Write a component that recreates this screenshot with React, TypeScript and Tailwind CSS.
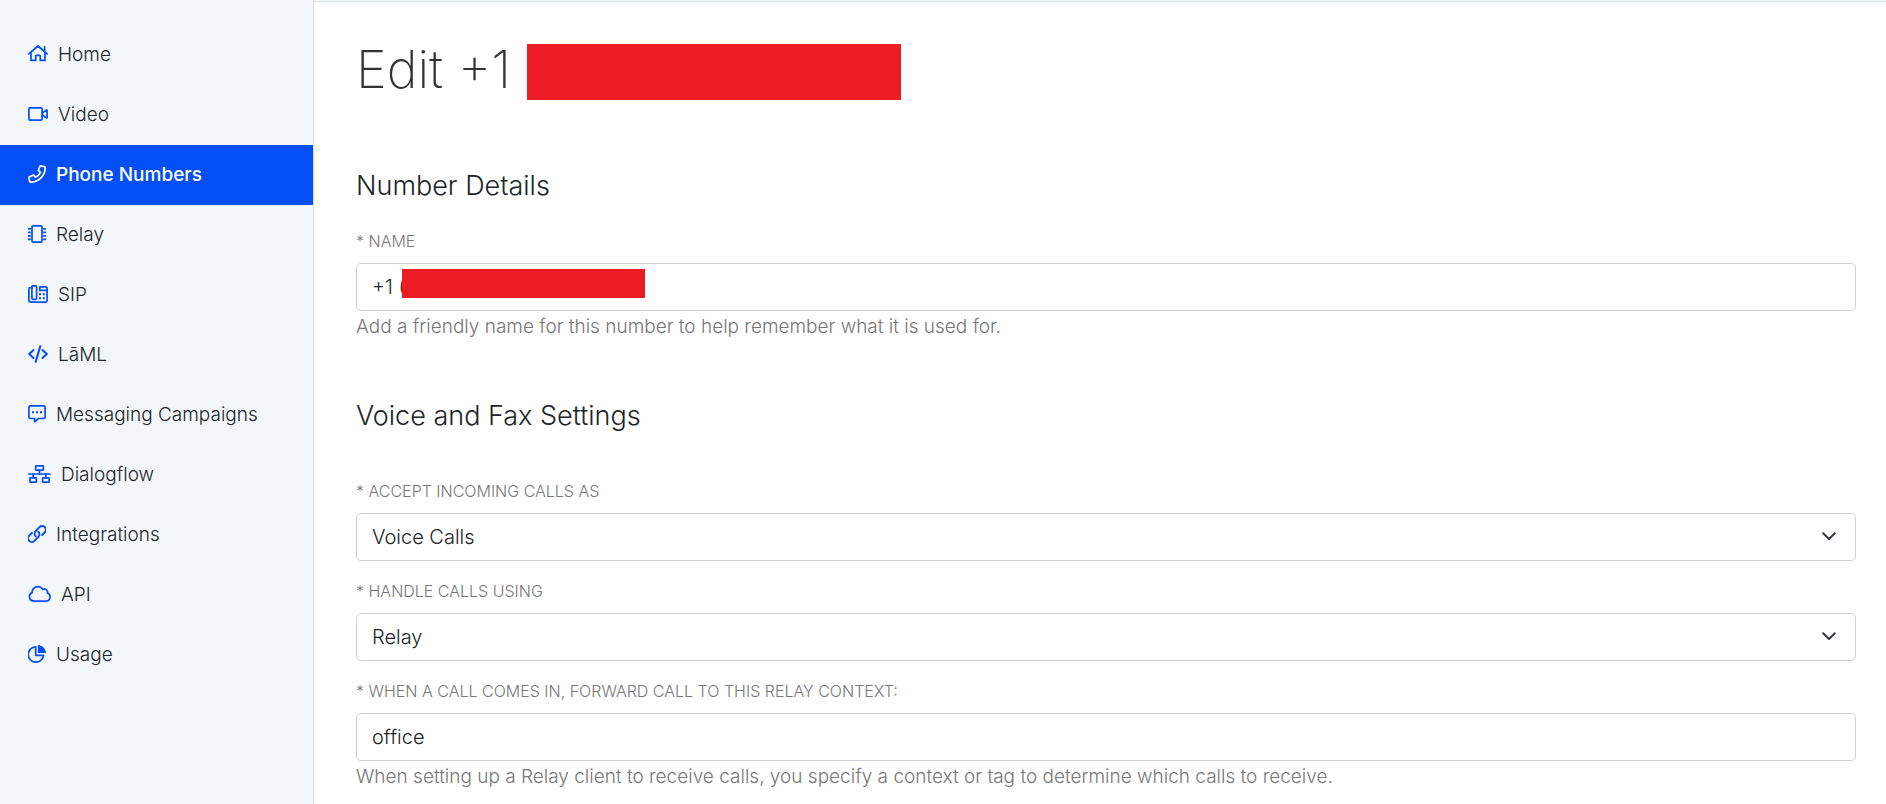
import React from 'react';

type IconProps = { width: number; children: React.ReactNode };

const Icon = ({ width, children }: IconProps) => (
  <svg
    width={width}
    height="18"
    viewBox={`0 0 ${width} 18`}
    fill="none"
    stroke="currentColor"
    strokeWidth="1.7"
    strokeLinecap="round"
    strokeLinejoin="round"
    className="flex-shrink-0"
    aria-hidden="true"
  >
    {children}
  </svg>
);

const HomeIcon = () => (
  <Icon width={20}>
    <path d="M.9 8.9 10 1l9.1 7.9M16.6 1.900v4.800" />
    <path d="M3 7.600v7.800h4.700v-4.200c0-.6.3-.9.9-.9h2.800c.6 0 .9.3.9.9v4.200H17V7.600" />
  </Icon>
);

const VideoIcon = () => (
  <Icon width={20}>
    <rect x=".9" y="2.9" width="13.2" height="12.2" rx="1.2" />
    <path d="m14.4 8 3.9-2.900c.4-.3.8-.1.8.4v7c0 .5-.4.7-.8.4L14.400 10" />
  </Icon>
);

const PhoneIcon = () => (
  <Icon width={18}>
    <path d="m12.800.9 3.600.8c.5.1.8.5.8 1C17.200 10.700 10.700 17.200 2.700 17.200c-.5 0-.9-.3-1-.8l-.8-3.500c-.1-.5.1-.9.6-1.100L5 10.300c.4-.2.8-.1 1.100.3l1.400 1.700a12 12 0 0 0 5-5l-1.700-1.400c-.4-.3-.5-.7-.3-1.100l1.400-3.300c.2-.4.5-.7.9-.6Z" />
  </Icon>
);

const ChipIcon = () => (
  <Icon width={18}>
    <rect x="4" y=".9" width="10" height="16.2" rx="1" />
    <path
      strokeLinecap="butt"
      d="M0 3.800h2.800M0 7.300h2.800M0 10.800h2.800M0 14.300h2.800M15.200 3.800H18M15.200 7.300H18M15.200 10.800H18M15.200 14.300H18"
    />
  </Icon>
);

const FaxIcon = () => (
  <Icon width={20}>
    <rect x="3.9" y=".9" width="4.7" height="13.4" rx="1.2" />
    <path d="M3.900 2.500H2.400c-.9 0-1.500.6-1.500 1.500v11.600c0 .9.6 1.500 1.500 1.500h15.200c.9 0 1.500-.6 1.500-1.500V3.800c0-1.100-.6-1.900-1.700-1.900h-5.600v3.500h7.200" />
    <path
      strokeWidth="2"
      strokeLinecap="butt"
      d="M11 9.300h2M14.800 9.300h2M11 13.200h2M14.800 13.200h2"
    />
  </Icon>
);

const CodeIcon = () => (
  <Icon width={20}>
    <path strokeWidth="2" d="M5.500 5 1.200 9l4.300 4M14.500 5l4.300 4-4.300 4M12.300 1.100 7.700 16.900" />
  </Icon>
);

const MessageIcon = () => (
  <Icon width={18}>
    <path d="M2.400.9h13.200c.9 0 1.500.6 1.500 1.500V12c0 .9-.6 1.500-1.500 1.500h-5.200l-3.800 3.300v-3.300H2.400c-.9 0-1.500-.6-1.500-1.500V2.400C.9 1.500 1.500.9 2.400.9Z" />
    <path strokeWidth="2" strokeLinecap="butt" d="M4 7.300h2M8 7.300h2M12 7.300h2" />
  </Icon>
);

const NetworkIcon = () => (
  <Icon width={23}>
    <rect x="7.7" y=".9" width="7.6" height="4.2" rx=".4" />
    <rect x="2" y="12.9" width="6.4" height="4.2" rx=".4" />
    <rect x="14.6" y="12.9" width="6.4" height="4.2" rx=".4" />
    <path d="M11.500 5.200V9M.9 9h21.200M5.200 9v3.800M17.800 9v3.800" />
  </Icon>
);

const LinkIcon = () => (
  <Icon width={18}>
    <g strokeWidth="2">
      <path d="M7.700 11.300a3.700 3.700 0 0 1-.1-5.200l3.900-4a3.700 3.700 0 0 1 5.300 5.300l-2.600 2.600" />
      <path d="M10.300 6.700a3.700 3.700 0 0 1 .1 5.200l-3.900 4a3.700 3.700 0 0 1-5.300-5.300l2.600-2.600" />
    </g>
  </Icon>
);

const CloudIcon = () => (
  <Icon width={23}>
    <path d="M5.400 16.200h12.500a4.300 4.300 0 0 0 1.500-8.300 3.300 3.300 0 0 0-4.700-3.600A5.700 5.700 0 0 0 4.200 7.600a4.500 4.500 0 0 0 1.200 8.600Z" />
  </Icon>
);

const PieIcon = () => (
  <Icon width={18}>
    <path d="M7.700 1.800a7.700 7.700 0 1 0 7.900 8.600H7.700Z" />
    <path fill="currentColor" stroke="none" d="M9.900 0c4.500.3 7.800 3.700 8.100 8.100H9.900Z" />
  </Icon>
);

const menu = [
  { label: 'Home', icon: HomeIcon },
  { label: 'Video', icon: VideoIcon },
  { label: 'Phone Numbers', icon: PhoneIcon, active: true },
  { label: 'Relay', icon: ChipIcon },
  { label: 'SIP', icon: FaxIcon },
  { label: 'LāML', icon: CodeIcon },
  { label: 'Messaging Campaigns', icon: MessageIcon },
  { label: 'Dialogflow', icon: NetworkIcon },
  { label: 'Integrations', icon: LinkIcon },
  { label: 'API', icon: CloudIcon },
  { label: 'Usage', icon: PieIcon },
];

const Sidebar = () => (
  <nav className="w-[314px] flex-shrink-0 bg-[#f3f7fa] border-r border-[#d9dcdf] pt-[25px]">
    {menu.map(({ label, icon: ItemIcon, active }) => (
      <a
        key={label}
        href="#"
        className={
          active
            ? 'flex items-center gap-2.5 h-[60px] pl-7 text-[19px] font-medium bg-[#044ef6] text-white'
            : 'flex items-center gap-2.5 h-[60px] pl-7 text-[19px] font-light text-[#212529]'
        }
      >
        <span className={active ? 'flex pb-0.5 text-white' : 'flex pb-0.5 text-[#044ef6]'}>
          <ItemIcon />
        </span>
        {label}
      </a>
    ))}
  </nav>
);

const fieldClass =
  'block w-full h-12 px-[15px] rounded-[5px] border border-[#ccd0d8] bg-white text-xl font-light text-[#212529] appearance-none';

type FieldProps = {
  id: string;
  label: string;
  help?: string;
  children: React.ReactNode;
};

const Field = ({ id, label, help, children }: FieldProps) => (
  <div>
    <label htmlFor={id} className="block mb-2.5 text-base leading-6 font-light uppercase text-[#777777]">
      * {label}
    </label>
    <div className="relative">{children}</div>
    {help && <p className="mt-1 text-[19px] leading-6 font-light text-[#777777]">{help}</p>}
  </div>
);

const SelectField = ({ id, label, value }: { id: string; label: string; value: string }) => (
  <Field id={id} label={label}>
    <select id={id} className={fieldClass}>
      <option>{value}</option>
    </select>
    <svg
      className="absolute right-5 top-4 pointer-events-none"
      width="14"
      height="14"
      viewBox="0 0 14 14"
      fill="none"
      stroke="#343a40"
      strokeWidth="2"
      strokeLinecap="round"
      strokeLinejoin="round"
      aria-hidden="true"
    >
      <path d="m1.200 4.200 5.800 5.800 5.800-5.800" />
    </svg>
  </Field>
);

const App = () => {
  return (
    <div className="flex min-h-screen bg-white font-['Inter','Liberation_Sans',sans-serif]">
      <Sidebar />

      <main className="flex-1 min-w-0">
        <div className="h-0.5 bg-[#f3f7fa] border-b border-[#d9dfe3]" />

        <div className="pl-[42px] pr-[30px]">
          <h1 className="flex items-start gap-4 pt-[42px] text-[52px] leading-[52px] font-extralight text-[#333333]">
            Edit +1
            <span className="w-[374px] h-14 bg-[#ed1c24]" />
          </h1>

          <section className="pt-[70px]">
            <h2 className="mb-[27px] text-[27px] leading-8 font-light text-[#212529]">Number Details</h2>
            <Field
              id="name"
              label="Name"
              help="Add a friendly name for this number to help remember what it is used for."
            >
              <input id="name" type="text" defaultValue="+1 (" className={fieldClass} />
              <span className="absolute left-[46px] top-1.5 w-[243px] h-[29px] bg-[#ed1c24]" />
            </Field>
          </section>

          <section className="pt-[61px]">
            <h2 className="mb-[47px] text-[27px] leading-8 font-light text-[#212529]">Voice and Fax Settings</h2>
            <div className="flex flex-col gap-[18px]">
              <SelectField id="accept" label="Accept incoming calls as" value="Voice Calls" />
              <SelectField id="handle" label="Handle calls using" value="Relay" />
              <Field
                id="context"
                label="When a call comes in, forward call to this relay context:"
                help="When setting up a Relay client to receive calls, you specify a context or tag to determine which calls to receive."
              >
                <input id="context" type="text" defaultValue="office" className={fieldClass} />
              </Field>
            </div>
          </section>
        </div>
      </main>
    </div>
  );
};

export default App;
